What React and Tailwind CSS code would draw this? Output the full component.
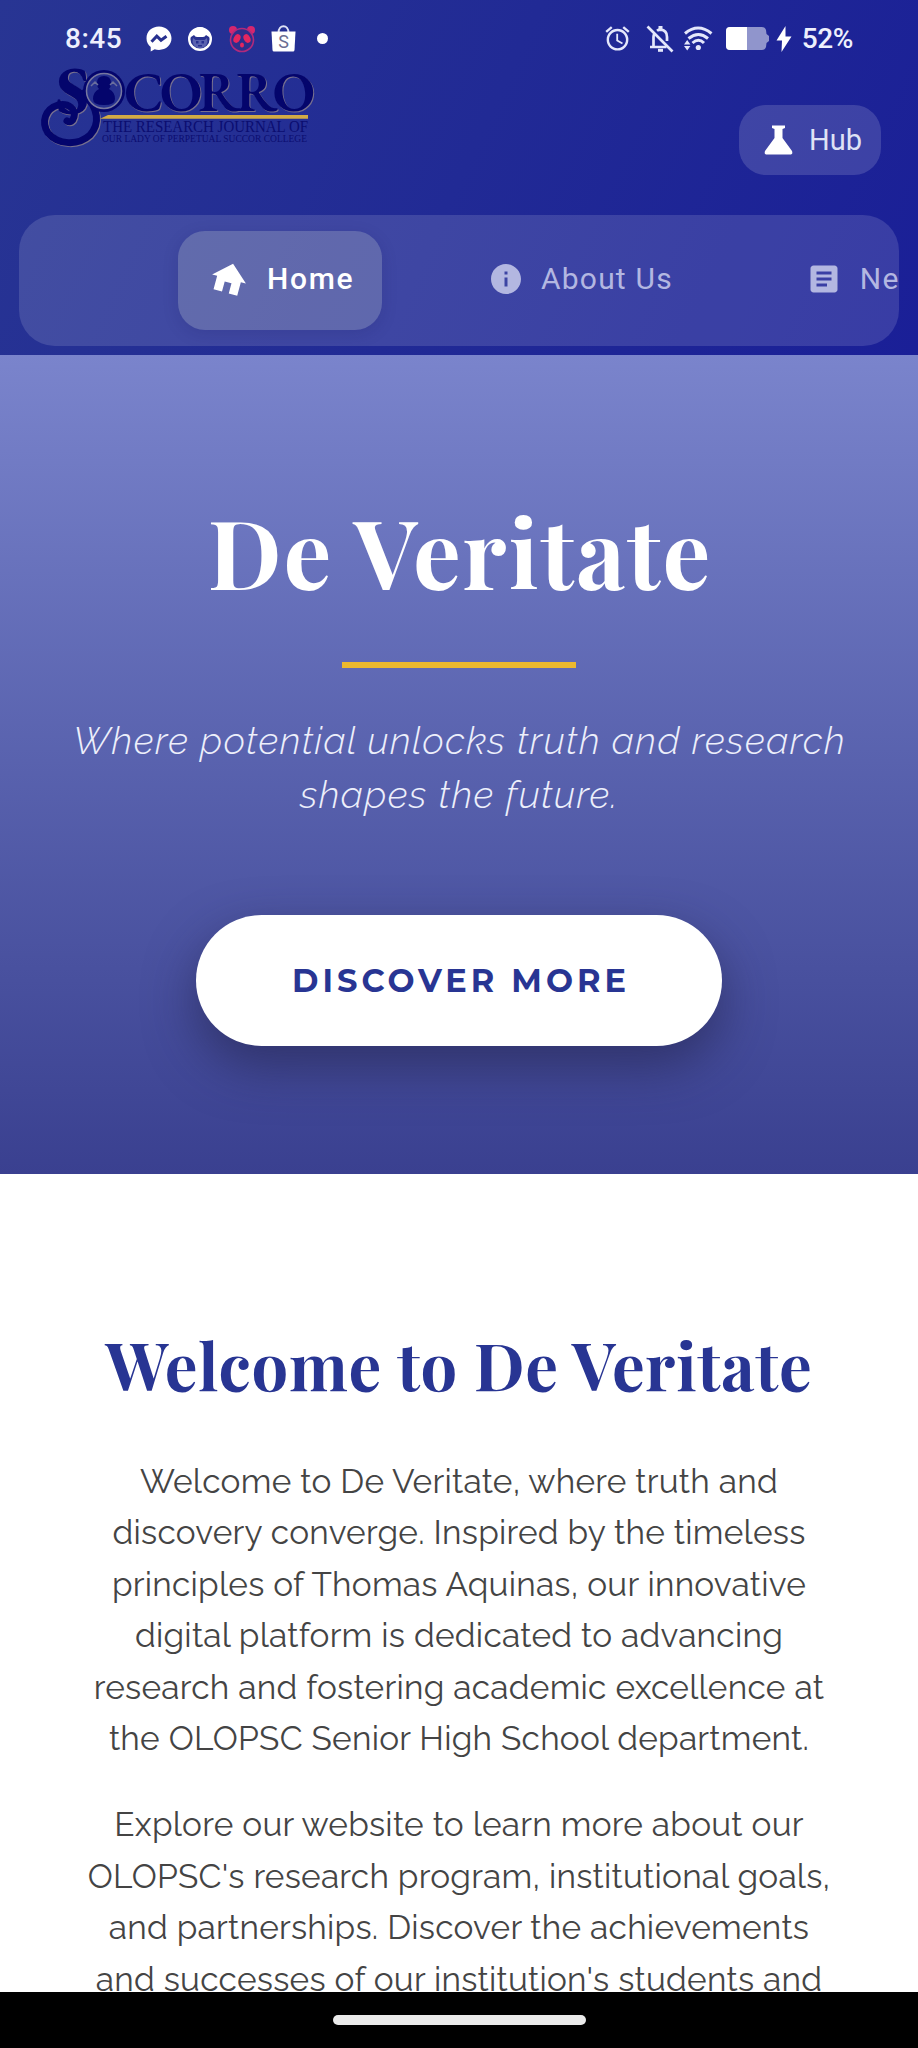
import React from 'react';
import { MdHome, MdInfo, MdArticle, MdAlarm } from 'react-icons/md';

const intro = [
  'Welcome to De Veritate, where truth and',
  'discovery converge. Inspired by the timeless',
  'principles of Thomas Aquinas, our innovative',
  'digital platform is dedicated to advancing',
  'research and fostering academic excellence at',
  'the OLOPSC Senior High School department.',
];

const explore = [
  'Explore our website to learn more about our',
  "OLOPSC's research program, institutional goals,",
  'and partnerships. Discover the achievements',
  "and successes of our institution's students and",
];

function MessengerIcon() {
  return (
    <svg className="ml-[24px] h-[26px] w-[26px]" viewBox="0 0 26 26">
      <path fill="#fff" d="M13 .5C5.800.5.500 5.500.500 12.300c0 3.700 1.600 6.700 4.200 8.800v4.400l4-2.200c1.300.400 2.700.600 4.300.600 7.200 0 12.500-5 12.500-11.600S20.200.5 13 .5z" />
      <path fill="none" stroke="#27308f" strokeWidth="3" d="M5.500 15.800l5.300-5.600 4.200 4 5.500-4" />
    </svg>
  );
}

function CatIcon() {
  return (
    <svg className="ml-[15px] h-[26px] w-[26px]" viewBox="0 0 26 26">
      <circle cx="13" cy="13" r="10.800" fill="#27308f" stroke="#fff" strokeWidth="2.400" />
      <path fill="#fff" d="M4 8Q7 1 13 1t9 7v3l-3-2q-1 2-3 2h-6q-2 0-3-2l-3 2z" />
      <path fill="#5b63b0" d="M6 12l2.500 2h9l2.500-2 .5 4q-1.500 6-7.500 6T5.500 16z" />
      <path fill="#27308f" d="M9 15h2.500v2.500H9zM14.500 15H17v2.500h-2.500zM11 19h4v1.500h-4z" />
    </svg>
  );
}

function PandaIcon() {
  return (
    <svg className="ml-[15px] h-7 w-7" viewBox="0 0 28 28">
      <g fill="#d5266f">
        <circle cx="5" cy="5" r="4" />
        <circle cx="23" cy="5" r="4" />
      </g>
      <circle cx="14" cy="15" r="11.500" fill="#2e2e8c" stroke="#b12a7c" strokeWidth="1.600" />
      <g fill="#e5265f">
        <ellipse cx="9" cy="13.500" rx="3.200" ry="4.600" transform="rotate(28 9 13.500)" />
        <ellipse cx="19" cy="13.500" rx="3.200" ry="4.600" transform="rotate(-28 19 13.500)" />
        <ellipse cx="14" cy="20" rx="2" ry="2.600" />
      </g>
    </svg>
  );
}

function BagIcon() {
  return (
    <svg className="ml-[15px] h-[27px] w-[25px]" viewBox="0 0 25 27">
      <path fill="none" stroke="#dfe2f6" strokeWidth="2" d="M7.500 8C7.500-1 17.500-1 17.500 8" />
      <path fill="#fff" d="M.5 6.500h24l-1 18.500q-.1 1.500-1.500 1.500H3q-1.400 0-1.500-1.500z" />
      <text x="12.500" y="22.500" textAnchor="middle" className="font-[Roboto] text-[18px] font-normal" fill="#6a6d92">S</text>
    </svg>
  );
}

function BellOffIcon() {
  return (
    <svg className="ml-[14px] h-7 w-7" viewBox="0 0 28 28" fill="none" stroke="#e4e7fb" strokeWidth="2.700">
      <path d="M7.500 22V12q0-2 1-3.500M11 5.800q1.500-1.200 3.500-1.200 6.500.4 6.500 7.400v4M4 22h16.500" />
      <path d="M1.500 1.500l25 25" />
      <path d="M14.500 1v3" strokeWidth="4" />
      <path d="M12 25.300h5" strokeWidth="3" />
    </svg>
  );
}

function WifiIcon() {
  return (
    <svg className="ml-[9px] h-7 w-[30px]" viewBox="0 0 30 28" fill="none" stroke="#e4e7fb" strokeWidth="3">
      <path d="M2 8.500Q15-2.500 28.500 8.500M5.500 13.500Q15.500 5.500 25 13.500M9.500 18Q15.500 12.500 21 18" />
      <circle cx="15.300" cy="22.500" r="2.600" fill="#e4e7fb" stroke="none" />
      <path fill="#e4e7fb" stroke="none" d="M1 19.500l3.200-4.500 3.200 4.500zM1 21l3.200 4.500L7.400 21z" />
    </svg>
  );
}

function BatteryIcon() {
  return (
    <svg className="ml-[13px] h-[23px] w-[43px]" viewBox="0 0 43 23">
      <path fill="#9095cc" d="M4 0h32q3 0 4 3l.5 4 2.500 2v5l-2.500 2-.5 4q-1 3-4 3H4q-4 0-4-4V4q0-4 4-4z" />
      <path fill="#fff" d="M4 0h17v23H4q-4 0-4-4V4q0-4 4-4z" />
    </svg>
  );
}

function StatusBar() {
  return (
    <div className="flex h-[60px] items-center justify-between pt-[18px] pr-[65px] pl-[65px] font-[Roboto] text-[28px] leading-none font-medium text-[#eef0fd]">
      <div className="flex h-[42px] items-center pb-[1px]">
        <span className="tracking-[0.5px]">8:45</span>
        <MessengerIcon />
        <CatIcon />
        <PandaIcon />
        <BagIcon />
        <span className="ml-[21px] h-[11px] w-[11px] rounded-full bg-white" />
      </div>
      <div className="flex h-[42px] items-center pb-[1px]">
        <MdAlarm className="h-[29px] w-[29px] text-[#e4e7fb]" />
        <BellOffIcon />
        <WifiIcon />
        <BatteryIcon />
        <svg className="ml-[7px] h-[26px] w-[16px]" viewBox="0 0 16 26">
          <path fill="#fff" d="M9.500 0L.500 14.500h5.500L5.500 26 15.500 10.500H9.500z" />
        </svg>
        <span className="ml-[10px] tracking-[-0.4px]">52%</span>
      </div>
    </div>
  );
}

function Logo() {
  return (
    <svg className="h-[84px] w-[280px] overflow-visible" viewBox="0 0 280 84" role="img" aria-label="Socorro">
      <g fill="#04056c" className="text-[#04056c] drop-shadow-[1.5px_1.5px_0_#77708e]">
        <text x="16" y="48" className="font-['EB_Garamond'] text-[68px] font-bold">S</text>
        <text x="84" y="45" textLength="191" className="font-['EB_Garamond'] text-[56px] font-semibold">CORRO</text>
        <path fill="none" stroke="currentColor" strokeWidth="7" strokeLinecap="round" d="M44 27C59 43 60 58 50 69C38 80 18 79 8 67C1 56 5 43 18 39C29 37 36 43 34 51C33 55 30 57 27 55" />
      </g>
      <circle cx="64" cy="25" r="21" fill="#04056c" />
      <circle cx="64" cy="25" r="17.500" fill="#26308f" stroke="#77789f" strokeWidth="1.500" />
      <path fill="#04056c" d="M64 10q7 0 7 7 0 4-2 6 6 3 6 10 0 6-11 6t-11-6q0-7 6-10-2-2-2-6 0-7 7-7z" />
      <path fill="none" stroke="#6a6e9d" strokeWidth="1.500" d="M51 20l4-4 3 3M70 19l3-3 4 4" />
      <path fill="#d2ab45" d="M68 49h200v3.800H60z" />
      <g fill="#0b0d70" className="font-['Liberation_Serif']">
        <text x="63" y="66" textLength="205" lengthAdjust="spacingAndGlyphs" className="text-[16px]">THE RESEARCH JOURNAL OF</text>
        <text x="62" y="76" textLength="205" lengthAdjust="spacingAndGlyphs" className="text-[10px]">OUR LADY OF PERPETUAL SUCCOR COLLEGE</text>
      </g>
    </svg>
  );
}

function Header() {
  return (
    <header className="h-[355px] bg-linear-[115deg] from-[#283593] to-[#1a1f97]">
      <StatusBar />
      <div className="flex h-[155px] items-start justify-between pr-[37px] pl-10">
        <div className="pt-[6px]">
          <Logo />
        </div>
        <button className="mt-[45px] flex h-[70px] w-[142px] items-center rounded-[27px] bg-white/15 pl-[25px] font-[Roboto] text-[29px] leading-none text-[#dfe2f5]">
          <svg className="h-[30px] w-[29px]" viewBox="0 0 29 30" fill="#fff">
            <path d="M8 .5h13v2.500l-2.500 1v9L28 26q1 3-1 3.500H2Q0 29 1 26l9.500-13V4L8 3z" />
          </svg>
          <span className="ml-[16px] pt-[1px] tracking-[0.1px]">Hub</span>
        </button>
      </div>
      <nav className="mx-[19px] flex h-[131px] items-center overflow-hidden rounded-[36px] bg-white/13 font-[Roboto] text-[30px] leading-none whitespace-nowrap text-[#b3b7e1]">
        <a className="ml-[159px] flex h-[99px] w-[204px] shrink-0 items-center rounded-[27px] bg-[#e8f0d8]/20 pb-[4px] font-medium text-white shadow-[0_4px_16px_rgba(20,20,90,0.15)]">
          <MdHome className="ml-[30px] h-[42px] w-[42px] shrink-0 rotate-15" />
          <span className="ml-[17px] tracking-[1.700px]">Home</span>
        </a>
        <a className="ml-[106px] flex shrink-0 items-center pb-[4px]">
          <MdInfo className="h-9 w-9" />
          <span className="ml-[17px] tracking-[1.200px]">About Us</span>
        </a>
        <a className="ml-[133px] flex shrink-0 items-center pb-[4px]">
          <MdArticle className="h-9 w-9" />
          <span className="ml-[18px] tracking-[1.300px]">News</span>
        </a>
      </nav>
    </header>
  );
}

function Hero() {
  return (
    <section className="flex h-[819px] flex-col items-center bg-linear-to-b from-[#7a84cc] to-[#3a4090]">
      <h1 className="mt-[132px] pl-[2px] font-['Playfair_Display'] text-[95px] leading-[127px] font-bold tracking-[2px] text-white">De Veritate</h1>
      <div className="mt-[48px] h-[6px] w-[234px] bg-[#ecb92f]" />
      <p className="mt-[47px] pl-[1px] text-center font-[Raleway] text-[37.500px] leading-[53.800px] font-light tracking-[1.380px] whitespace-nowrap text-[#edeffb] italic">
        Where potential unlocks truth and research
        <br />
        shapes the future.
      </p>
      <button className="mt-[92px] h-[131px] w-[526px] rounded-full bg-white pt-[2px] pl-[4px] font-[Montserrat] text-[32px] font-bold tracking-[4px] text-[#283593] shadow-[0_20px_50px_rgba(35,35,75,0.6)]">
        DISCOVER MORE
      </button>
    </section>
  );
}

function Lines({ lines }) {
  return lines.map((line) => (
    <span key={line} className="block">
      {line}
    </span>
  ));
}

function Welcome() {
  return (
    <main className="h-[818px] overflow-hidden bg-white text-center whitespace-nowrap">
      <h2 className="mt-[147px] font-['Playfair_Display'] text-[65px] leading-[87px] font-bold tracking-[0.750px] text-[#283593]">Welcome to De Veritate</h2>
      <div className="mt-[48px] font-[Raleway] text-[33.400px] leading-[51.400px] tracking-[0.250px] text-[#444]">
        <p>
          <Lines lines={intro} />
        </p>
        <p className="mt-[35px]">
          <Lines lines={explore} />
        </p>
      </div>
    </main>
  );
}

export default function App() {
  return (
    <div className="flex h-[2048px] w-[918px] flex-col overflow-hidden bg-white">
      <Header />
      <Hero />
      <Welcome />
      <footer className="flex h-14 shrink-0 items-center justify-center bg-black">
        <div className="h-[10px] w-[253px] rounded-full bg-[#ebebeb]" />
      </footer>
    </div>
  );
}
